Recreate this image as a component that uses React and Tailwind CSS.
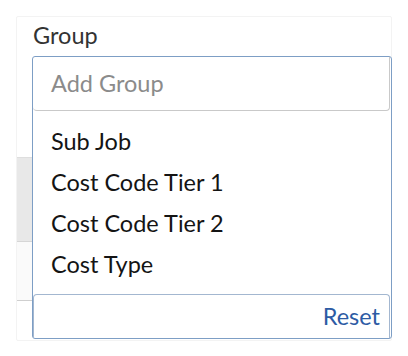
import React from 'react';

const OPTIONS = ['Sub Job', 'Cost Code Tier 1', 'Cost Code Tier 2', 'Cost Type'];

export default function App() {
  return (
    <div className="w-[408px] h-[356px] bg-white pt-4 pl-4 font-['Lato',_'Liberation_Sans',_sans-serif]">
      <div className="relative w-[376px] h-[325px] border border-[#f3f3f3] rounded-[2px] bg-white">
        <div className="pl-4 pt-[2px] text-[23.5px] leading-[32px] text-[#333333]">Group</div>

        {/* table rows behind the dropdown */}
        <div className="mt-[106px]">
          <div className="h-[1px] bg-[#dedede]" />
          <div className="h-[83px] bg-[#e8e8e8]" />
          <div className="h-[1px] bg-[#d6d6d6]" />
          <div className="h-[58px] bg-[#fafafa]" />
          <div className="h-[1px] bg-[#cfcfcf]" />
        </div>

        {/* open group dropdown */}
        <div className="absolute left-[15px] top-[39px] w-[360px] h-[283px] border border-[#7d9ec5] rounded-[3px] bg-white flex flex-col">
          <div className="h-[54px] mr-[1px] flex items-center pl-[18px] border-r border-b border-[#c9c9c9] rounded-b-[4px] text-[23.5px] text-[#8b8b8b]">
            Add Group
          </div>
          <ul className="mt-[10px] pl-[18px]">
            {OPTIONS.map((o) => (
              <li key={o} className="h-[41px] leading-[41px] text-[23.5px] text-[#141414]">{o}</li>
            ))}
          </ul>
          <div className="mt-auto h-[44px] mr-[1px] border-t border-r border-l border-[#a3b7d0] rounded-t-[4px] flex items-center justify-end pr-[9px]">
            <span className="text-[23.5px] text-[#2d5ba4]">Reset</span>
          </div>
        </div>
      </div>
    </div>
  );
}
